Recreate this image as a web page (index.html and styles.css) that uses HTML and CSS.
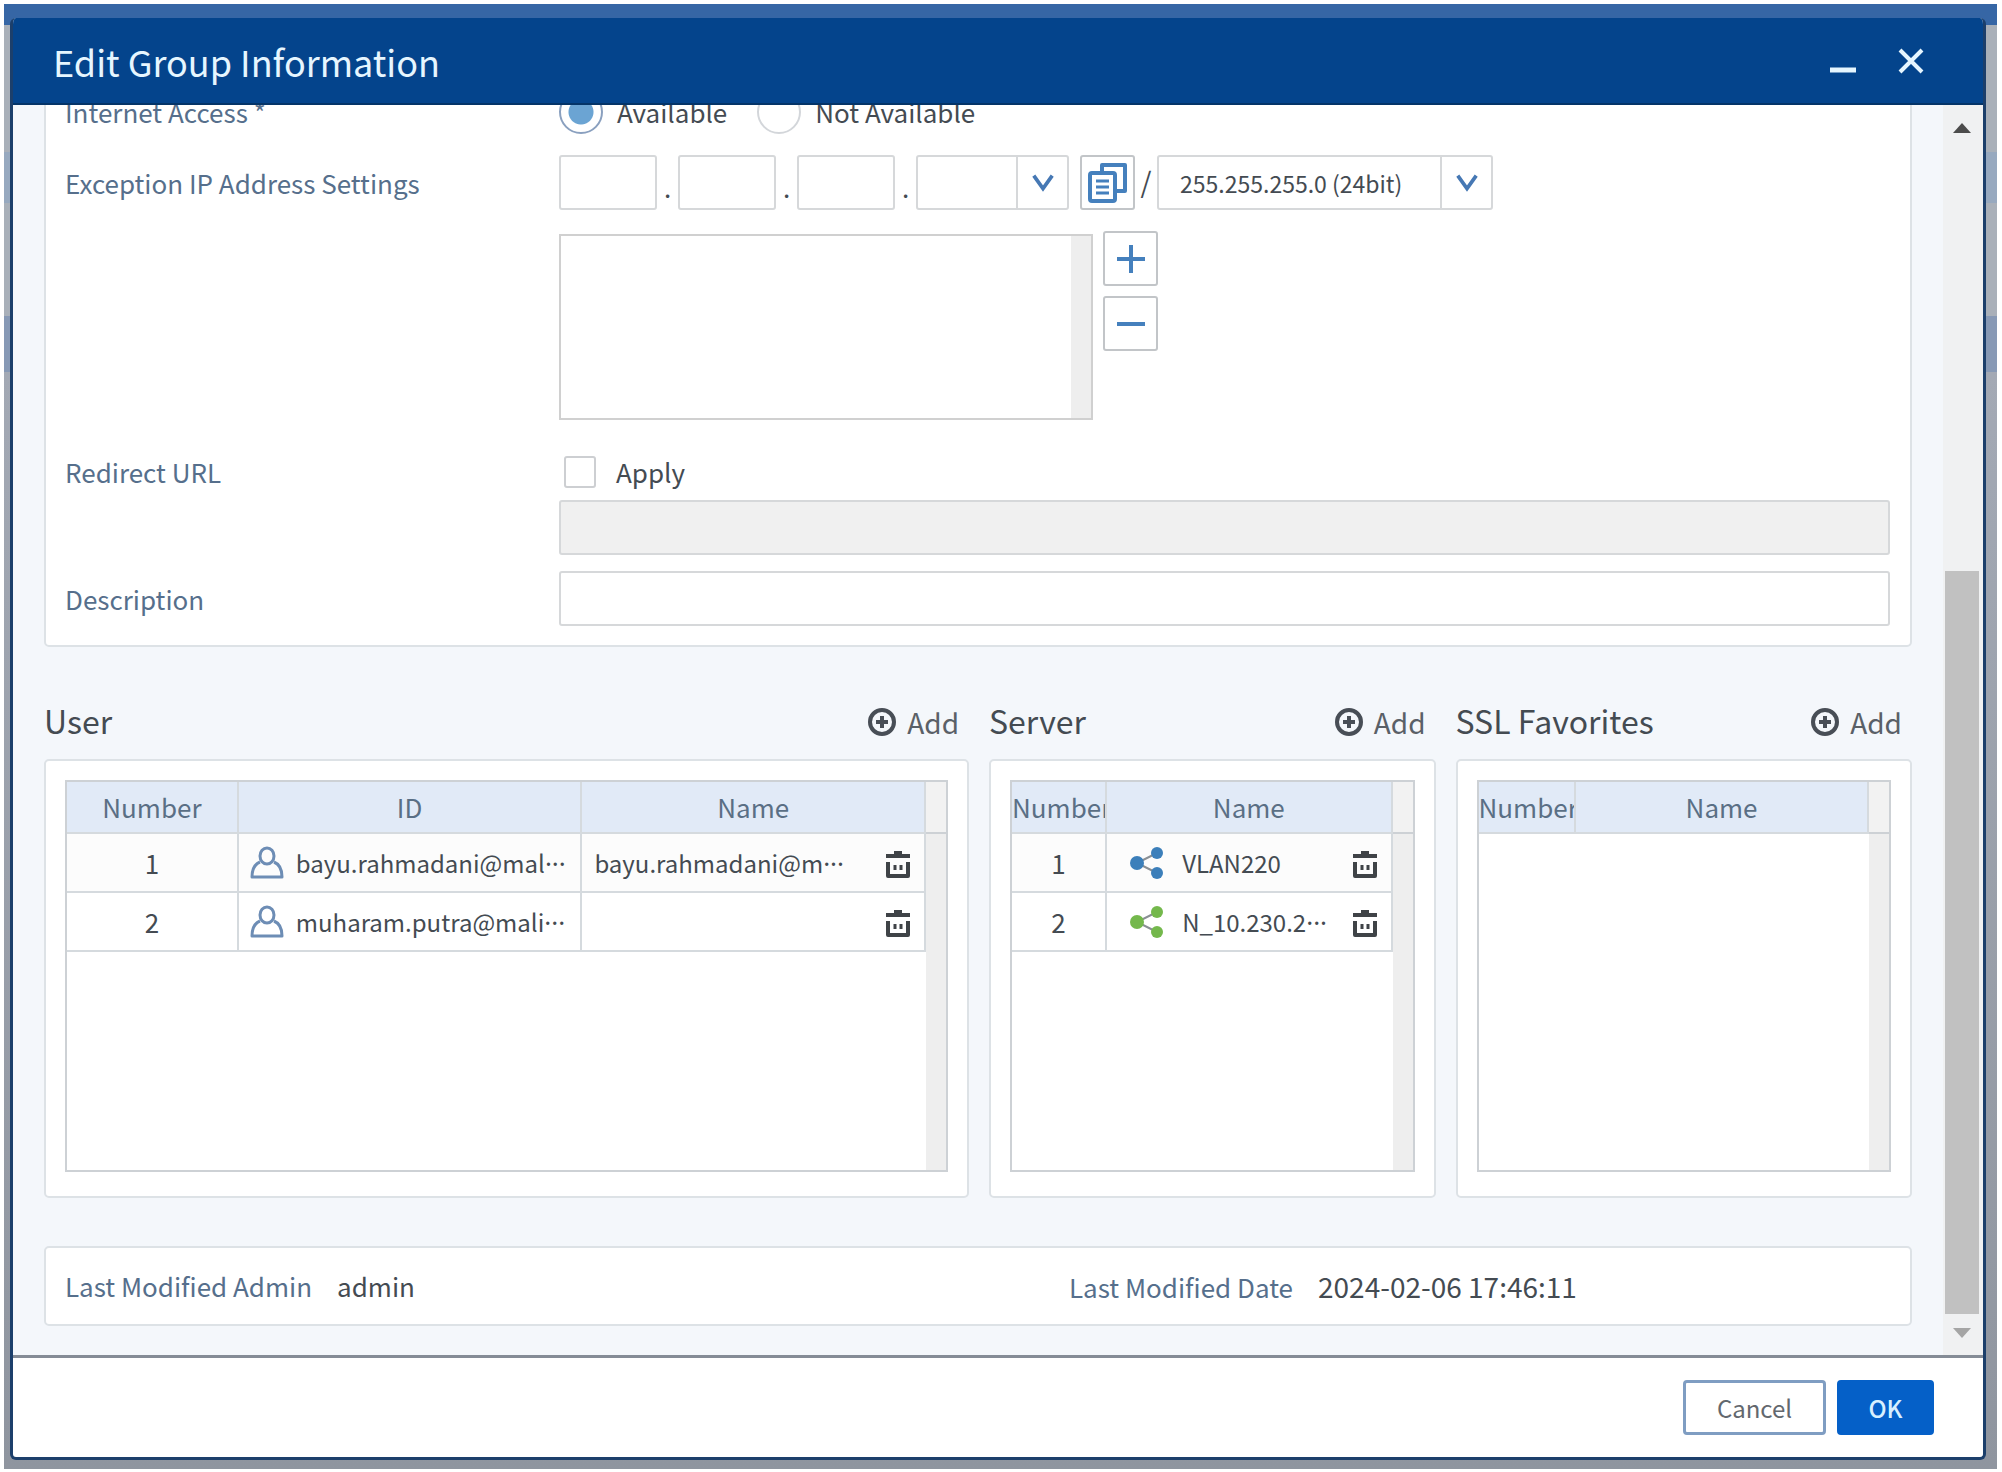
FILE: index.html
```html
<!DOCTYPE html>
<html lang="en">
<head>
    <meta charset="utf-8" />
    <meta name="viewport" content="width=device-width, initial-scale=1.0">
    <title>Edit Group Information</title>
    <link rel="stylesheet" href="styles.css">
</head>
<body>
    <!-- shared icons -->
    <svg class="sprite" aria-hidden="true">
        <symbol id="icon-chevron" viewBox="0 0 26 20">
            <path d="M3 2 L13 16 L23 2" fill="none" stroke="currentColor" stroke-width="4" />
        </symbol>
        <symbol id="icon-add" viewBox="0 0 30 30">
            <circle cx="15" cy="15" r="12" fill="none" stroke="currentColor" stroke-width="4" />
            <path d="M15 9v12M9 15h12" stroke="currentColor" stroke-width="4" />
        </symbol>
        <symbol id="icon-trash" viewBox="0 0 26 30">
            <path d="M1 6h24M9 3h8" fill="none" stroke="currentColor" stroke-width="4" />
            <path d="M3 12v14h20V12" fill="none" stroke="currentColor" stroke-width="4" stroke-linejoin="round" />
            <path d="M10 15v5M16 15v5" stroke="currentColor" stroke-width="3" />
        </symbol>
        <symbol id="icon-user" viewBox="0 0 34 34">
            <path d="M10 16C5 18 2 23 2 31H32C32 23 29 18 24 16" fill="none" stroke="currentColor" stroke-width="3" stroke-linejoin="round" />
            <ellipse cx="17" cy="10" rx="7" ry="8" fill="none" stroke="currentColor" stroke-width="3" />
        </symbol>
        <symbol id="icon-share" viewBox="0 0 34 32">
            <path d="M27 6L7 16L27 26" fill="none" stroke="#8a8f94" stroke-width="2" />
            <circle cx="7" cy="16" r="7" fill="currentColor" />
            <circle cx="27" cy="6" r="6" fill="currentColor" />
            <circle cx="27" cy="26" r="6" fill="currentColor" />
        </symbol>
    </svg>

    <div class="backdrop">
        <div class="dialog" role="dialog" aria-labelledby="title">
            <header class="dialog-header">
                <h1 id="title">Edit Group Information</h1>
                <button type="button" class="window-btn" aria-label="Minimize">
                    <svg width="26" height="26" viewBox="0 0 26 26"><path d="M0 22h26" stroke="currentColor" stroke-width="5" /></svg>
                </button>
                <button type="button" class="window-btn" aria-label="Close">
                    <svg width="26" height="26" viewBox="0 0 26 26"><path d="M2 2L24 24M24 2L2 24" stroke="currentColor" stroke-width="4" /></svg>
                </button>
            </header>

            <div class="dialog-body">
                <div class="content">
                    <form class="card settings">
                        <div class="row row-access">
                            <span class="label">Internet Access *</span>
                            <div class="radios">
                                <input type="radio" name="access" id="available" checked>
                                <label for="available">Available</label>
                                <input type="radio" name="access" id="not-available">
                                <label for="not-available">Not Available</label>
                            </div>
                        </div>
                        <div class="row row-ip">
                            <label class="label" for="ip1">Exception IP Address Settings</label>
                            <div class="ip">
                                <input type="text" class="field octet" id="ip1">
                                <span class="dot">.</span>
                                <input type="text" class="field octet" aria-label="Second octet">
                                <span class="dot">.</span>
                                <input type="text" class="field octet" aria-label="Third octet">
                                <span class="dot">.</span>
                                <div class="field combo">
                                    <input type="text" aria-label="Fourth octet">
                                    <button type="button" aria-label="Choose address">
                                        <svg width="24" height="20"><use href="#icon-chevron" /></svg>
                                    </button>
                                </div>
                                <button type="button" class="square-btn copy-btn" aria-label="Copy">
                                    <svg width="40" height="40" viewBox="0 0 40 40" fill="none" stroke="currentColor" stroke-width="4" stroke-linejoin="round">
                                        <path d="M14 9V2H37V28H28" />
                                        <rect x="2" y="10" width="25" height="28" rx="2" />
                                        <path d="M8 18h13M8 24h13M8 30h13" stroke-width="3" />
                                    </svg>
                                </button>
                                <span class="slash">/</span>
                                <div class="mask">
                                    <select class="field" aria-label="Subnet mask">
                                        <option>255.255.255.0 (24bit)</option>
                                    </select>
                                    <span class="mask-arrow"><svg width="24" height="20"><use href="#icon-chevron" /></svg></span>
                                </div>
                            </div>
                        </div>
                        <div class="row row-list">
                            <span></span>
                            <div class="ip-list">
                                <textarea aria-label="Exception IP addresses"></textarea>
                                <div class="ip-list-btns">
                                    <button type="button" class="square-btn" aria-label="Add address">
                                        <svg width="28" height="28" viewBox="0 0 28 28"><path d="M14 0v28M0 14h28" stroke="currentColor" stroke-width="4" /></svg>
                                    </button>
                                    <button type="button" class="square-btn" aria-label="Remove address">
                                        <svg width="28" height="28" viewBox="0 0 28 28"><path d="M0 14h28" stroke="currentColor" stroke-width="4" /></svg>
                                    </button>
                                </div>
                            </div>
                        </div>
                        <div class="row row-apply">
                            <label class="label" for="redirect-url">Redirect URL</label>
                            <div class="apply">
                                <input type="checkbox" id="apply">
                                <label for="apply">Apply</label>
                            </div>
                        </div>
                        <div class="row row-url">
                            <span></span>
                            <input type="text" class="field" id="redirect-url" disabled>
                        </div>
                        <div class="row row-description">
                            <label class="label" for="description">Description</label>
                            <input type="text" class="field" id="description">
                        </div>
                    </form>

                    <div class="lists">
                        <section>
                            <div class="list-head">
                                <h2>User</h2>
                                <button type="button" class="add-btn"><svg width="30" height="30"><use href="#icon-add" /></svg>Add</button>
                            </div>
                            <div class="card list-card">
                                <div class="grid-box">
                                    <table>
                                        <colgroup><col class="col-fifth"><col class="col-two-fifths"><col></colgroup>
                                        <thead>
                                            <tr><th>Number</th><th>ID</th><th>Name</th></tr>
                                        </thead>
                                        <tbody>
                                            <tr>
                                                <td>1</td>
                                                <td><div class="cell"><svg class="user-icon" width="34" height="34"><use href="#icon-user" /></svg>bayu.rahmadani@mal<span class="more">···</span></div></td>
                                                <td><div class="cell">bayu.rahmadani@m<span class="more">···</span><button type="button" class="trash" aria-label="Delete"><svg width="26" height="30"><use href="#icon-trash" /></svg></button></div></td>
                                            </tr>
                                            <tr>
                                                <td>2</td>
                                                <td><div class="cell"><svg class="user-icon" width="34" height="34"><use href="#icon-user" /></svg>muharam.putra@mali<span class="more">···</span></div></td>
                                                <td><div class="cell"><button type="button" class="trash" aria-label="Delete"><svg width="26" height="30"><use href="#icon-trash" /></svg></button></div></td>
                                            </tr>
                                        </tbody>
                                    </table>
                                    <div class="gutter"></div>
                                </div>
                            </div>
                        </section>

                        <section>
                            <div class="list-head">
                                <h2>Server</h2>
                                <button type="button" class="add-btn"><svg width="30" height="30"><use href="#icon-add" /></svg>Add</button>
                            </div>
                            <div class="card list-card">
                                <div class="grid-box">
                                    <table>
                                        <colgroup><col class="col-quarter"><col></colgroup>
                                        <thead>
                                            <tr><th>Number</th><th>Name</th></tr>
                                        </thead>
                                        <tbody>
                                            <tr>
                                                <td>1</td>
                                                <td><div class="cell server"><svg class="vlan" width="34" height="32"><use href="#icon-share" /></svg>VLAN220<button type="button" class="trash" aria-label="Delete"><svg width="26" height="30"><use href="#icon-trash" /></svg></button></div></td>
                                            </tr>
                                            <tr>
                                                <td>2</td>
                                                <td><div class="cell server"><svg class="network" width="34" height="32"><use href="#icon-share" /></svg>N_10.230.2<span class="more">···</span><button type="button" class="trash" aria-label="Delete"><svg width="26" height="30"><use href="#icon-trash" /></svg></button></div></td>
                                            </tr>
                                        </tbody>
                                    </table>
                                    <div class="gutter"></div>
                                </div>
                            </div>
                        </section>

                        <section>
                            <div class="list-head">
                                <h2>SSL Favorites</h2>
                                <button type="button" class="add-btn"><svg width="30" height="30"><use href="#icon-add" /></svg>Add</button>
                            </div>
                            <div class="card list-card">
                                <div class="grid-box">
                                    <table>
                                        <colgroup><col class="col-quarter"><col></colgroup>
                                        <thead>
                                            <tr><th>Number</th><th>Name</th></tr>
                                        </thead>
                                    </table>
                                    <div class="gutter"></div>
                                </div>
                            </div>
                        </section>
                    </div>

                    <div class="card modified">
                        <div><span class="label">Last Modified Admin</span><span>admin</span></div>
                        <div><span class="label">Last Modified Date</span><span class="date">2024-02-06 17:46:11</span></div>
                    </div>
                </div>

                <div class="scrollbar">
                    <svg class="scroll-up" width="18" height="10" viewBox="0 0 18 10"><path d="M0 10L9 0L18 10z" /></svg>
                    <div class="thumb"></div>
                    <svg class="scroll-down" width="18" height="10" viewBox="0 0 18 10"><path d="M0 0L9 10L18 0z" /></svg>
                </div>
            </div>

            <footer class="dialog-footer">
                <button type="button" class="btn">Cancel</button>
                <button type="button" class="btn btn-primary">OK</button>
            </footer>
        </div>
    </div>
</body>
</html>
```

FILE: styles.css
```css
* {
    box-sizing: border-box;
}
body {
    margin: 0;
    height: 100vh;
    padding: 4px 5px 3px 4px;
    background: #fff;
    color: #444b52;
    font-family: "Noto Sans CJK KR", "Open Sans", sans-serif;
    font-size: 26px;
    line-height: 40px;
}
input,
select,
textarea,
button {
    margin: 0;
    padding: 0;
    border: none;
    border-radius: 0;
    background: none;
    color: inherit;
    font: inherit;
    appearance: none;
}
button {
    display: flex;
    align-items: center;
    justify-content: center;
    flex: none;
}
svg {
    display: block;
    flex: none;
}
h1,
h2 {
    margin: 0;
    font-weight: 400;
}
.sprite {
    position: absolute;
    width: 0;
    height: 0;
}

/* page behind the dialog */
.backdrop {
    height: 100%;
    padding: 14px 11px 9px 6px;
    background: linear-gradient(#3666a5 21px, #a9b0b9 21px, #a9b0b9 148px, #97a9bf 148px, #97a9bf 199px, #a9b0b9 199px, #a9b0b9 312px, #8799b5 312px, #8799b5 368px, #a3a9b4 368px, #8f959f);
}
.dialog {
    display: flex;
    flex-direction: column;
    height: 100%;
    border: 3px solid #1c3f6b;
    border-top: none;
    border-radius: 6px;
    background: #fff;
    overflow: hidden;
}
.dialog-header {
    display: flex;
    align-items: center;
    gap: 42px;
    flex: none;
    height: 87px;
    margin: 0 -3px;
    padding: 0 62px 0 43px;
    border-bottom: 2px solid #043468;
    background: #04448c;
    color: #e6f6ff;
}
.dialog-header h1 {
    flex: 1;
    font-size: 36px;
    line-height: 52px;
}
.dialog-body {
    display: flex;
    flex: 1;
    min-height: 0;
    background: #f4f7fb;
}

/* content is scrolled to its end */
.content {
    display: flex;
    flex-direction: column;
    justify-content: flex-end;
    flex: 1;
    padding: 0 31px 29px;
    overflow: hidden;
}
.card {
    flex: none;
    border: 2px solid #dde2e6;
    border-radius: 5px;
    background: #fff;
}
.label {
    color: #566f8c;
}
.settings {
    padding: 20px 20px 19px 19px;
}
.row {
    display: grid;
    grid-template-columns: 494px 1fr;
    align-items: center;
}
.row-access {
    height: 44px;
}
.row-ip {
    margin-top: 21px;
}
.row-list {
    margin-top: 21px;
}
.row-apply {
    margin-top: 32px;
}
.row-url {
    margin-top: 8px;
}
.row-description {
    margin-top: 16px;
}
.field {
    width: 100%;
    height: 55px;
    border: 2px solid #d6d8da;
    border-radius: 3px;
    background: #fff;
}
.field:disabled {
    background: #f0f0f0;
}

.radios,
.apply {
    display: flex;
    align-items: center;
}
.radios input {
    width: 44px;
    height: 44px;
    margin-right: 14px;
    border: 2px solid #d3d6da;
    border-radius: 50%;
    background: #fff;
}
.radios input:checked {
    border-color: #8aa0bf;
    background: radial-gradient(circle, #6ba4d3 12px, #fff 13px);
}
.radios label + input {
    margin-left: 30px;
}
.apply {
    padding-left: 5px;
}
.apply input {
    width: 32px;
    height: 32px;
    margin-right: 20px;
    border: 2px solid #cdcfd2;
    border-radius: 3px;
}

.ip {
    display: flex;
}
.ip .octet {
    width: 98px;
}
.dot {
    width: 21px;
    padding-top: 12px;
    text-align: center;
}
.combo {
    display: flex;
    width: 153px;
}
.ip .combo {
    flex: none;
}
.combo input {
    flex: 1;
    min-width: 0;
}
.combo button {
    width: 51px;
    border-left: 2px solid #d6d8da;
    color: #4678b4;
}
.square-btn {
    width: 55px;
    height: 55px;
    border: 2px solid #c2c5c8;
    border-radius: 3px;
    background: #fff;
    color: #4580bd;
}
.copy-btn {
    margin-left: 11px;
}
.slash {
    width: 22px;
    padding-top: 6px;
    font-size: 28px;
    text-align: center;
}
.mask {
    position: relative;
    width: 336px;
}
.mask select {
    display: block;
    padding: 0 54px 0 21px;
    font-size: 23px;
}
.mask-arrow {
    position: absolute;
    top: 2px;
    right: 2px;
    bottom: 2px;
    width: 51px;
    display: flex;
    align-items: center;
    justify-content: center;
    border-left: 2px solid #d6d8da;
    color: #4678b4;
    pointer-events: none;
}
.ip-list {
    display: flex;
    gap: 10px;
}
.ip-list textarea {
    width: 534px;
    height: 186px;
    margin-top: 3px;
    border: 2px solid #d0d0d0;
    background: linear-gradient(to left, #eee 20px, #fff 20px);
    resize: none;
}
.ip-list-btns {
    display: flex;
    flex-direction: column;
    gap: 10px;
}

/* user, server and favorites */
.lists {
    display: grid;
    grid-template-columns: 924fr 446fr 456fr;
    gap: 20px;
    flex: none;
    margin: 50px 0 48px;
}
.list-head {
    display: flex;
    align-items: center;
    justify-content: space-between;
    height: 46px;
    margin-bottom: 16px;
    padding-right: 10px;
}
.list-head h2 {
    font-size: 32px;
}
.add-btn {
    gap: 10px;
    padding-top: 4px;
    color: #5a6067;
    font-size: 28px;
}
.add-btn svg {
    color: #484e56;
}
.list-card {
    padding: 19px 19px 24px;
}
.grid-box {
    display: flex;
    align-items: flex-start;
    height: 392px;
    border: 2px solid #cdd1d5;
}
table {
    flex: 1;
    width: 0;
    border-spacing: 0;
    table-layout: fixed;
}
.col-fifth {
    width: 20%;
}
.col-two-fifths {
    width: 40%;
}
.col-quarter {
    width: 25%;
}
th,
td {
    padding: 0;
    border-right: 2px solid #d5dade;
    border-bottom: 2px solid #d5dade;
    text-align: center;
    white-space: nowrap;
    overflow: hidden;
}
th {
    height: 52px;
    background: #e1eaf7;
    color: #5a6f85;
    font-weight: 400;
}
td {
    height: 59px;
}
tbody tr:first-child {
    background: #fcfcfc;
}
.gutter {
    align-self: stretch;
    width: 20px;
    background: linear-gradient(#f2f2f2 50px, #cdd1d5 50px, #cdd1d5 52px, #eee 52px);
}
.cell {
    display: flex;
    align-items: center;
    padding: 0 13px 0 12px;
    font-size: 24px;
}
.cell.server {
    padding-left: 23px;
}
.cell svg:first-child {
    margin-right: 12px;
}
.cell.server > svg {
    margin-right: 18px;
}
.more {
    font-family: "Noto Sans", sans-serif;
    font-size: 26px;
}
.user-icon {
    margin-left: -1px;
    color: #6d8db5;
}
.vlan {
    color: #3c7fba;
}
.network {
    color: #74b84c;
}
.trash {
    margin-left: auto;
    padding-top: 4px;
    color: #3f4347;
}
.cell .trash svg {
    margin: 0;
}

.modified {
    display: grid;
    grid-template-columns: 1004px 1fr;
    align-items: center;
    height: 80px;
    padding: 0 20px 0 19px;
}
.modified .label {
    margin-right: 25px;
}
.modified .date {
    font-size: 28px;
}

.scrollbar {
    display: flex;
    flex-direction: column;
    align-items: center;
    width: 40px;
    padding: 18px 2px 17px 0;
    background: #f0f1f2;
}
.scroll-up {
    fill: #4c4c4c;
}
.scroll-down {
    margin-top: 14px;
    fill: #a5a5a5;
}
.thumb {
    width: 34px;
    flex: 0 1 743px;
    margin-top: auto;
    background: #c1c1c1;
}

.dialog-footer {
    display: flex;
    align-items: flex-start;
    justify-content: flex-end;
    gap: 11px;
    flex: none;
    height: 102px;
    padding: 22px 49px 0;
    border-top: 3px solid #858c96;
}
.btn {
    min-width: 143px;
    height: 55px;
    border: 3px solid #7f9dc2;
    border-radius: 4px;
    color: #63686e;
    font-size: 24px;
}
.btn-primary {
    min-width: 97px;
    border-color: #0560c8;
    background: #0560c8;
    color: #d8f0ff;
    font-weight: 500;
}
```
